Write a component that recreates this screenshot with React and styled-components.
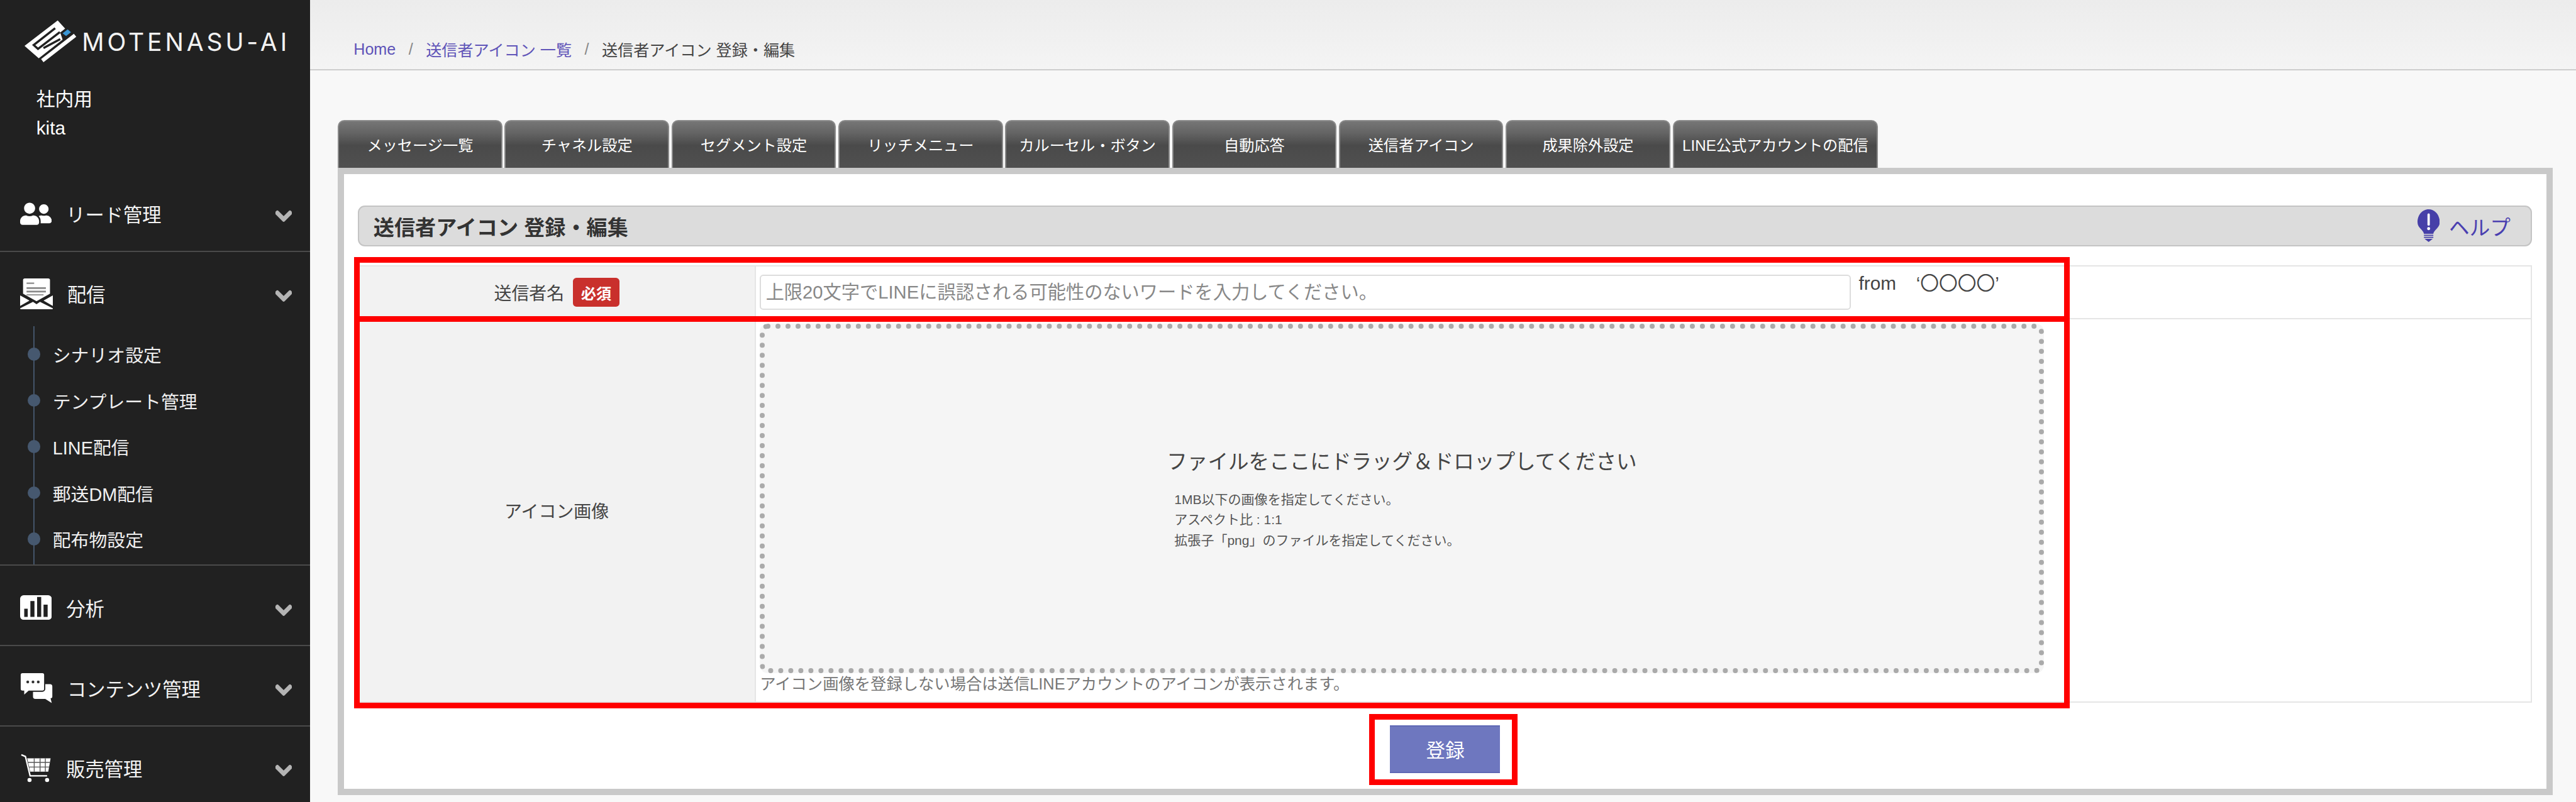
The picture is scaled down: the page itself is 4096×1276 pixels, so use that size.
import React from "react";
import styled, { createGlobalStyle } from "styled-components";
import { FaUserFriends, FaChevronDown } from "react-icons/fa";

// 参照画像(4400px幅)の寸法をそのまま書けるようにする
const u = (n) => `${(n * 4096) / 4400}px`;

const GlobalStyle = createGlobalStyle`
  html, body {
    margin: 0;
    height: 100%;
    overflow: hidden;
    background-color: #f8f8f8;
  }
  * { box-sizing: border-box; }
`;

const Page = styled.div`
  display: flex;
  height: 100vh;
  overflow: hidden;
  color: #444;
  font-family: "Liberation Sans", "Noto Sans CJK JP", sans-serif;
`;

const Sidebar = styled.aside`
  flex: 0 0 ${u(530)};
  display: flex;
  flex-direction: column;
  background-color: #212121;
  color: #fff;
  overflow: hidden;
`;

const Brand = styled.div`
  flex: 0 0 ${u(294)};
`;

const LogoRow = styled.div`
  display: flex;
  align-items: center;
  gap: ${u(8)};
  height: ${u(75)};
  margin-top: ${u(33)};
  padding-left: ${u(42)};
`;

const LogoMark = styled.svg`
  width: ${u(90)};
  height: ${u(75)};
  flex: none;
`;

const LogoText = styled.span`
  font-family: Inter, "Liberation Sans", sans-serif;
  font-size: ${u(42)};
  font-weight: 400;
  letter-spacing: ${u(5.2)};
  line-height: 1;
  color: #f2f2f2;
  white-space: nowrap;
  margin-top: ${u(3)};
`;

const UserBlock = styled.div`
  margin-top: ${u(37)};
  padding-left: ${u(62)};
  font-size: ${u(32)};
  line-height: ${u(49)};
`;

const NavSection = styled.div`
  border-bottom: 2px solid #4a4a4a;
  flex: none;
`;

const NavHead = styled.div`
  display: flex;
  align-items: center;
  height: ${(p) => (p.$open ? u(126) : u(135))};
  padding: ${(p) => (p.$open ? u(16) : u(8))} ${u(32)} 0 ${u(34)};
`;

const NavIcon = styled.span`
  flex: 0 0 ${u(54)};
  margin-right: ${u(25)};
  display: flex;
  align-items: center;
  justify-content: center;
  color: #fff;

  svg {
    display: block;
  }
`;

const NavLabel = styled.span`
  flex: 1;
  font-size: ${u(32.5)};
  color: #f4f4f4;
`;

const Chevron = styled(FaChevronDown)`
  flex: none;
  width: ${u(28)};
  height: ${u(32)};
  margin-top: ${u(8)};
  color: #b4b4b4;
  stroke: currentColor;
  stroke-width: 40;
`;

const SubList = styled.ul`
  list-style: none;
  margin: 0;
  padding: ${u(9)} 0 ${u(4.5)};
  background: linear-gradient(#46586f, #46586f) no-repeat ${u(57)} 0 / ${u(2)} 100%;
`;

const SubItem = styled.li`
  display: flex;
  align-items: center;
  gap: ${u(21)};
  height: ${u(78.9)};
  padding-left: ${u(47)};
  font-size: ${u(31)};
  color: #f0f0f0;
`;

const SubDot = styled.span`
  flex: 0 0 ${u(22)};
  height: ${u(22)};
  border-radius: 50%;
  background-color: #46586f;
`;

const Main = styled.main`
  flex: 1;
  min-width: 0;
  display: flex;
  flex-direction: column;
`;

const TopBar = styled.header`
  flex: 0 0 ${u(120)};
  display: flex;
  align-items: center;
  gap: ${u(22)};
  padding: ${u(50)} 0 0 ${u(74)};
  font-size: ${u(27)};
  background: linear-gradient(#ececec, #f4f4f4);
  border-bottom: 2px solid #cdcdcd;
`;

const Crumb = styled.a`
  color: ${(p) => (p.$current ? "#444" : "#5f54b8")};
  white-space: nowrap;
`;

const CrumbSep = styled.span`
  color: #888;
`;

const Content = styled.div`
  padding: ${u(85)} ${u(40)} 0 ${u(47)};
`;

const Tabs = styled.nav`
  display: flex;
  gap: ${u(4)};
`;

const Tab = styled.a`
  flex: 0 0 ${(p) => (p.$wide ? u(351) : u(281))};
  height: ${u(82)};
  display: flex;
  align-items: center;
  justify-content: center;
  font-size: ${u(26)};
  color: #fff;
  white-space: nowrap;
  background: linear-gradient(#767676, #646464 25%, #4a4a4a 52%, #505050);
  border: 2px solid #8a8a8a;
  border-bottom: none;
  border-radius: ${u(11)} ${u(11)} 0 0;
`;

const Panel = styled.section`
  height: ${u(1072)};
  padding: ${u(54)} ${u(24)} 0 ${u(23)};
  background-color: #fff;
  border: ${u(11)} solid #c9c9c9;
`;

const Heading = styled.div`
  height: ${u(69)};
  display: flex;
  align-items: center;
  justify-content: space-between;
  padding: 0 ${u(35)} 0 ${u(25)};
  background-color: #dcdcdc;
  border: 2px solid #c4c4c4;
  border-radius: ${u(12)};
`;

const HeadingTitle = styled.h2`
  margin: 0;
  font-size: ${u(35.6)};
  font-weight: 700;
  color: #333;
`;

const HelpLink = styled.a`
  display: flex;
  align-items: center;
  gap: ${u(16)};
  font-size: ${u(35)};
  color: #4a3fb0;
`;

const Bulb = styled.svg`
  width: ${u(38)};
  height: ${u(56)};
`;

const FormTable = styled.div`
  height: ${u(747)};
  margin-top: ${u(33)};
  display: flex;
  flex-direction: column;
  border: 2px solid #e5e5e5;
`;

const Row = styled.div`
  position: relative;
  display: flex;
  flex: ${(p) => (p.$grow ? "1" : `0 0 ${u(90)}`)};
  border-bottom: ${(p) => (p.$grow ? "none" : "2px solid #e5e5e5")};
`;

const LabelCell = styled.div`
  flex: 0 0 ${u(678)};
  display: flex;
  align-items: center;
  justify-content: center;
  gap: ${u(15)};
  font-size: ${u(30)};
  color: #444;
  background-color: #f2f2f2;
  border-right: 2px solid #e5e5e5;
`;

const Badge = styled.span`
  display: flex;
  align-items: center;
  justify-content: center;
  width: ${u(79)};
  height: ${u(49)};
  font-size: ${u(26)};
  font-weight: 700;
  color: #fff;
  background-color: #c9302c;
  border-radius: ${u(6)};
`;

const ValueCell = styled.div`
  flex: 1;
  min-width: 0;
  display: flex;
  flex-direction: ${(p) => (p.$column ? "column" : "row")};
  padding: ${(p) => (p.$column ? u(7) : u(14))} 0 0 ${u(7)};
`;

const NameInput = styled.input.attrs({ type: "text" })`
  flex: 0 0 ${u(1864)};
  height: ${u(60)};
  padding: 0 ${u(8)};
  font-family: inherit;
  font-size: ${u(31.4)};
  color: #444;
  background-color: #fff;
  border: 2px solid #ddd;
  border-radius: ${u(6)};
  outline: none;

  &::placeholder {
    color: #888;
    opacity: 1;
  }
`;

const FromHint = styled.span`
  margin: 0 0 0 ${u(13)};
  font-size: ${u(32)};
  line-height: ${u(30)};
  white-space: nowrap;
  color: #444;
`;

const FromMarks = styled.span`
  margin-left: ${u(34)};
`;

const DropZone = styled.div`
  flex: 0 0 ${u(598)};
  width: ${u(2193)};
  display: flex;
  flex-direction: column;
  align-items: center;
  justify-content: center;
  padding-top: ${u(3)};
  background-color: #f5f5f5;
  border: ${u(8.6)} dotted #aaa;
  border-radius: ${u(14)};
`;

const DropBody = styled.div`
  display: flex;
  flex-direction: column;
`;

const DropTitle = styled.div`
  font-size: ${u(35)};
  line-height: ${u(50)};
  color: #444;
  white-space: nowrap;
`;

const DropRules = styled.div`
  margin: ${u(21)} 0 0 ${u(13)};
  font-size: ${u(22.6)};
  line-height: ${u(35)};
  color: #555;
`;

const Note = styled.div`
  margin-top: ${u(2)};
  font-size: ${u(27.2)};
  line-height: ${u(34)};
  color: #777;
  white-space: nowrap;
`;

// 注釈の赤枠。行の上に重ねる
const RedFrame = styled.div`
  position: absolute;
  left: ${u(-8)};
  top: ${(p) => u(p.$top)};
  width: ${u(2930)};
  height: ${(p) => u(p.$height)};
  border: ${u(10)} solid #f00;
  pointer-events: none;
`;

const Actions = styled.div`
  display: flex;
  justify-content: center;
  margin-top: ${u(20)};
`;

const ButtonFrame = styled.div`
  margin-left: ${u(-5)};
  padding: ${u(9)} ${u(20)} ${u(11)} ${u(26)};
  border: ${u(10)} solid #f00;
`;

const SubmitButton = styled.button`
  display: block;
  width: ${u(188)};
  height: ${u(82)};
  font-family: inherit;
  font-size: ${u(33)};
  color: #fff;
  background-color: #6e77bf;
  border: none;
  border-top: 2px solid #5f68b5;
  border-bottom: 2px solid #5f68b5;
`;

const Logo = () => (
  <LogoMark viewBox="35 25 270 225">
    <path
      fill="#fff"
      d="M205 30 L243 72 L218 92 L230 128 L108 224 L35 160 Z"
    />
    <path
      fill="none"
      stroke="#212121"
      strokeWidth="11"
      d="M192 70 L82 156 L104 176 L216 90 M218 126 L132 172"
    />
    <path fill="none" stroke="#fff" strokeWidth="20" d="M126 236 L294 106" />
    <path fill="#3a97d6" d="M230 96 L256 76 L273 90 L248 110 Z" />
  </LogoMark>
);

const MailIcon = () => (
  <svg width={u(56)} height={u(53)} viewBox="0 0 56 53">
    <path
      fill="#fff"
      d="M8 0 H48 a3 3 0 0 1 3 3 V26 L28 39 L5 26 V3 a3 3 0 0 1 3 -3 Z"
    />
    <path
      fill="#8a8a8a"
      d="M11 7 H24 V9.500 H11 Z M11 15 H44 V18 H11 Z M11 21 H44 V24 H11 Z M11 27 H40 V29 H11 Z"
    />
    <path
      fill="#fff"
      d="M0 29 L16 38 L0 47 Z M56 29 L40 38 L56 47 Z M0 51 L22 40 L28 44 L34 40 L56 51 Q56 53 53 53 H3 Q0 53 0 51 Z"
    />
  </svg>
);

const ChartIcon = () => (
  <svg width={u(54)} height={u(42)} viewBox="0 0 54 42">
    <rect width="54" height="42" rx="6" fill="#fff" />
    <path
      fill="#212121"
      d="M7 23 H13 V37 H7 Z M17.500 10 H24.500 V37 H17.500 Z M29 3 H36 V37 H29 Z M40 16 H47 V37 H40 Z"
    />
  </svg>
);

const ChatIcon = () => (
  <svg width={u(56)} height={u(52)} viewBox="0 0 56 52">
    <path
      fill="#fff"
      d="M24 20 H51 a4 4 0 0 1 4 4 V41 Q55 44 52 44 L54 52 L43 45 H26 a4 4 0 0 1 -4 -4 V22 Z"
    />
    <path
      fill="#fff"
      stroke="#212121"
      strokeWidth="2"
      d="M4 0 H38 a4 4 0 0 1 4 4 V28 a4 4 0 0 1 -4 4 H15 L6 40 V32 H4 a4 4 0 0 1 -4 -4 V4 a4 4 0 0 1 4 -4 Z"
    />
    <circle cx="13" cy="16" r="2.400" fill="#333" />
    <circle cx="22" cy="16" r="2.400" fill="#333" />
    <circle cx="31" cy="16" r="2.400" fill="#333" />
  </svg>
);

const CartIcon = () => (
  <svg width={u(52)} height={u(49)} viewBox="0 0 52 49">
    <path
      fill="none"
      stroke="#fff"
      strokeWidth="2.500"
      d="M1 2 L8 5 L16 38 H45"
    />
    <path fill="#fff" d="M11 8 H51 L47 31 H16 Z" />
    <path
      fill="none"
      stroke="#555"
      strokeWidth="1.500"
      d="M12 15 H50 M14 23 H49 M23 8 V31 M33 8 V31 M42 8 V31"
    />
    <circle cx="15" cy="45" r="3.500" fill="#fff" />
    <circle cx="45" cy="45" r="3.500" fill="#fff" />
  </svg>
);

const BulbIcon = () => (
  <Bulb viewBox="0 0 38 56">
    <path
      fill="#463fa8"
      d="M19 0 C30 0 38 10 38 22 C38 32 28 35 27 42 H11 C10 35 0 32 0 22 C0 10 8 0 19 0 Z"
    />
    <path
      fill="#463fa8"
      d="M11 43.500 H27 V45.500 H11 Z M11 47 H27 V49 H11 Z M12 50.500 H26 L19 56 Z"
    />
    <rect x="17" y="7" width="4" height="21" rx="2" fill="#fff" />
    <circle cx="19" cy="33" r="2.600" fill="#fff" />
  </Bulb>
);

const TAB_LABELS = [
  "メッセージ一覧",
  "チャネル設定",
  "セグメント設定",
  "リッチメニュー",
  "カルーセル・ボタン",
  "自動応答",
  "送信者アイコン",
  "成果除外設定",
];

const SUB_ITEMS = [
  "シナリオ設定",
  "テンプレート管理",
  "LINE配信",
  "郵送DM配信",
  "配布物設定",
];

export default function App() {
  return (
    <Page>
      <GlobalStyle />
      <Sidebar>
        <Brand>
          <LogoRow>
            <Logo />
            <LogoText>MOTENASU-AI</LogoText>
          </LogoRow>
          <UserBlock>
            <div>社内用</div>
            <div>kita</div>
          </UserBlock>
        </Brand>

        <NavSection>
          <NavHead>
            <NavIcon>
              <FaUserFriends size={u(54)} />
            </NavIcon>
            <NavLabel>リード管理</NavLabel>
            <Chevron />
          </NavHead>
        </NavSection>

        <NavSection>
          <NavHead $open>
            <NavIcon>
              <MailIcon />
            </NavIcon>
            <NavLabel>配信</NavLabel>
            <Chevron />
          </NavHead>
          <SubList>
            {SUB_ITEMS.map((item) => (
              <SubItem key={item}>
                <SubDot />
                {item}
              </SubItem>
            ))}
          </SubList>
        </NavSection>

        <NavSection>
          <NavHead>
            <NavIcon>
              <ChartIcon />
            </NavIcon>
            <NavLabel>分析</NavLabel>
            <Chevron />
          </NavHead>
        </NavSection>

        <NavSection>
          <NavHead>
            <NavIcon>
              <ChatIcon />
            </NavIcon>
            <NavLabel>コンテンツ管理</NavLabel>
            <Chevron />
          </NavHead>
        </NavSection>

        <NavSection>
          <NavHead>
            <NavIcon>
              <CartIcon />
            </NavIcon>
            <NavLabel>販売管理</NavLabel>
            <Chevron />
          </NavHead>
        </NavSection>
      </Sidebar>

      <Main>
        <TopBar>
          <Crumb>Home</Crumb>
          <CrumbSep>/</CrumbSep>
          <Crumb>送信者アイコン 一覧</Crumb>
          <CrumbSep>/</CrumbSep>
          <Crumb $current>送信者アイコン 登録・編集</Crumb>
        </TopBar>

        <Content>
          <Tabs>
            {TAB_LABELS.map((label) => (
              <Tab key={label}>{label}</Tab>
            ))}
            <Tab $wide>LINE公式アカウントの配信</Tab>
          </Tabs>

          <Panel>
            <Heading>
              <HeadingTitle>送信者アイコン 登録・編集</HeadingTitle>
              <HelpLink>
                <BulbIcon />
                ヘルプ
              </HelpLink>
            </Heading>

            <FormTable>
              <Row>
                <LabelCell>
                  送信者名
                  <Badge>必須</Badge>
                </LabelCell>
                <ValueCell>
                  <NameInput placeholder="上限20文字でLINEに誤認される可能性のないワードを入力してください。" />
                  <FromHint>
                    from
                    <FromMarks>‘〇〇〇〇’</FromMarks>
                  </FromHint>
                </ValueCell>
                <RedFrame $top={-17} $height={111} />
              </Row>
              <Row $grow>
                <LabelCell>アイコン画像</LabelCell>
                <ValueCell $column>
                  <DropZone>
                    <DropBody>
                      <DropTitle>ファイルをここにドラッグ＆ドロップしてください</DropTitle>
                      <DropRules>
                        <div>1MB以下の画像を指定してください。</div>
                        <div>アスペクト比 : 1:1</div>
                        <div>拡張子「png」のファイルを指定してください。</div>
                      </DropRules>
                    </DropBody>
                  </DropZone>
                  <Note>アイコン画像を登録しない場合は送信LINEアカウントのアイコンが表示されます。</Note>
                </ValueCell>
                <RedFrame $top={-6} $height={671} />
              </Row>
            </FormTable>

            <Actions>
              <ButtonFrame>
                <SubmitButton>登録</SubmitButton>
              </ButtonFrame>
            </Actions>
          </Panel>
        </Content>
      </Main>
    </Page>
  );
}
